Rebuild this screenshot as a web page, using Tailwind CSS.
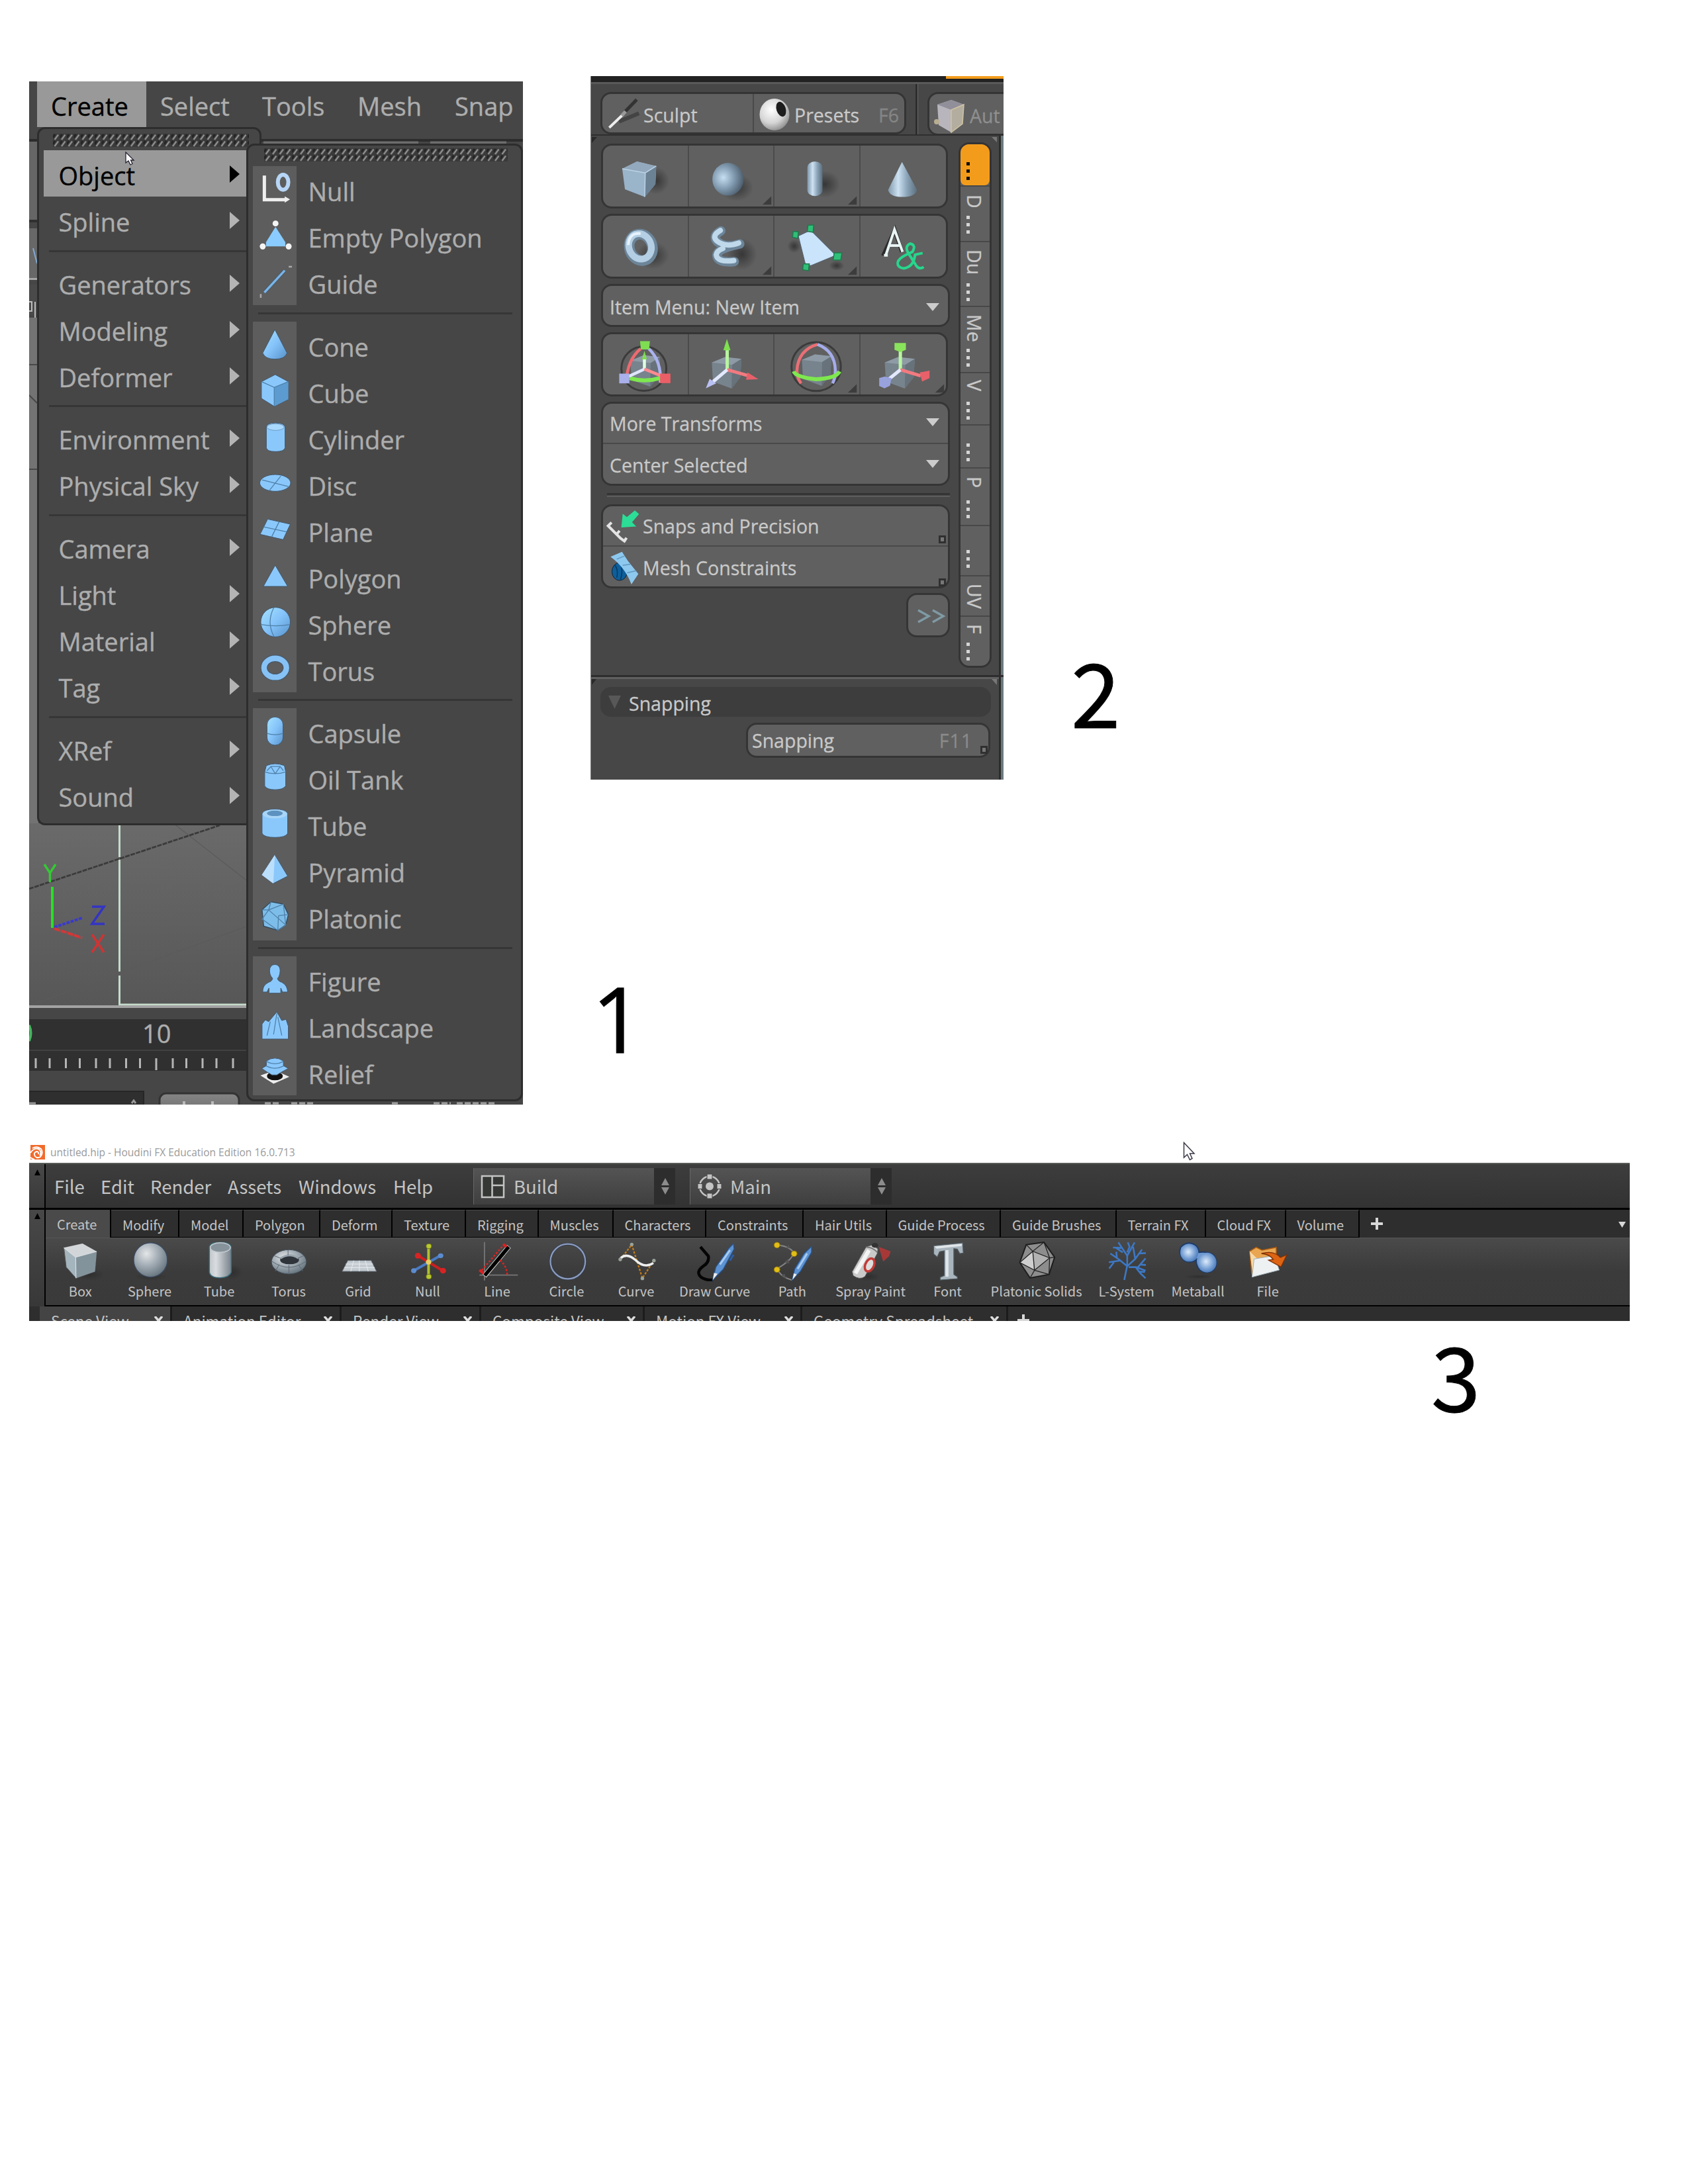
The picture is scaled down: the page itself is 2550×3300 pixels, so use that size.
<!DOCTYPE html>
<html lang="en">
<head>
<meta charset="utf-8">
<title>Primitive creation menus</title>
<script src="https://cdn.jsdelivr.net/npm/@tailwindcss/browser@4"></script>
</head>
<body class="bg-white">
<svg class="absolute w-0 h-0">
  <defs>
    <linearGradient id="bl" x1="0" x2="1" y1="0" y2="1"><stop offset="0" stop-color="#a6e4ff"/><stop offset=".5" stop-color="#84c2fa"/><stop offset="1" stop-color="#5793ca"/></linearGradient>
    <linearGradient id="met" x1="0" x2="1"><stop offset="0" stop-color="#8098ab"/><stop offset=".35" stop-color="#cde2f2"/><stop offset=".65" stop-color="#8ca5b9"/><stop offset="1" stop-color="#5b6e7e"/></linearGradient>
    <radialGradient id="ball" cx=".35" cy=".45" r=".65"><stop offset="0" stop-color="#c6dff2"/><stop offset=".5" stop-color="#869fb4"/><stop offset="1" stop-color="#4d5f6f"/></radialGradient>
    <radialGradient id="shade"><stop offset="0" stop-color="#2c2c2c" stop-opacity=".8"/><stop offset="1" stop-color="#2c2c2c" stop-opacity="0"/></radialGradient>
    <radialGradient id="gray" cx=".38" cy=".32" r=".7"><stop offset="0" stop-color="#e4e6e8"/><stop offset=".5" stop-color="#a3adb5"/><stop offset="1" stop-color="#687680"/></radialGradient>
    <radialGradient id="eye" cx=".4" cy=".35" r=".7"><stop offset="0" stop-color="#fff"/><stop offset=".6" stop-color="#d5d5d5"/><stop offset="1" stop-color="#8a8a8a"/></radialGradient>
    <radialGradient id="meta" cx=".45" cy=".45" r=".6"><stop offset="0" stop-color="#dcebfa"/><stop offset=".6" stop-color="#7ba3d6"/><stop offset="1" stop-color="#4576b6"/></radialGradient>
    <linearGradient id="tube" x1="0" x2="1"><stop offset="0" stop-color="#c0c6cb"/><stop offset=".3" stop-color="#d9dde0"/><stop offset="1" stop-color="#77818a"/></linearGradient>
    <linearGradient id="view" x1="0" x2="0" y1="0" y2="1"><stop offset="0" stop-color="#6a6a6a"/><stop offset="1" stop-color="#575757"/></linearGradient>
    <linearGradient id="btn" x1="0" x2="0" y1="0" y2="1"><stop offset="0" stop-color="#858585"/><stop offset="1" stop-color="#686868"/></linearGradient>
    <pattern id="grip" width="10.5" height="10" patternUnits="userSpaceOnUse"><rect width="10.5" height="10" fill="#3a3a3a"/><path d="M0 6 3 1" stroke="#242424" stroke-width="3"/><path d="M2.5 9 8 1.5" stroke="#929292" stroke-width="2.2"/></pattern>
  </defs>
</svg>
<main class="relative w-[2550px] h-[3300px] overflow-hidden bg-white">

  <!-- Menu bar with nested Create > Object menus -->
  <section class="absolute left-[44px] top-[123px] w-[746px] h-[1546px] overflow-hidden bg-[#464646] font-['Open_Sans',sans-serif] text-[38px] text-[#adadad] [-webkit-text-stroke:0.4px]">
    <svg class="absolute left-0 top-0" width="746" height="1546" viewBox="44 123 746 1546">
      <rect x="44" y="210" width="746" height="4" fill="#2c2c2c"/>
      <rect x="44" y="214" width="14" height="118" fill="#666"/><rect x="44" y="332" width="14" height="4" fill="#303030"/>
      <rect x="44" y="345" width="14" height="75" fill="#686868"/><path d="M50 375 56 398" stroke="#7fa9d4" stroke-width="2"/>
      <rect x="44" y="420" width="14" height="3" fill="#a5a5a5"/><rect x="44" y="430" width="14" height="46" fill="#4a4a4a"/>
      <path d="M53 456V480M44 456h4v14h-4" stroke="#bbb" stroke-width="2" fill="none"/>
      <rect x="44" y="480" width="14" height="768" fill="#737373"/><path d="M44 551h12M44 709h12M44 597l12 12" stroke="#484848" stroke-width="2"/>
      <path d="M398 215.500H632M650 215.500H765" stroke="#6c6c6c" stroke-width="4"/>
      <rect x="44" y="1244" width="330" height="276" fill="url(#view)"/>
      <path d="M262 1244 372 1330M44 1520 372 1400" stroke="#5b5b5b" stroke-width="1.200"/>
      <path d="M44 1343 332 1247" stroke="#3b3b3b" stroke-width="2.800" stroke-dasharray="7 1.500"/>
      <path d="M180.500 1244V1295M180.500 1299V1468M180.500 1474V1518H372" stroke="#c6dccc" stroke-width="3" fill="none"/>
      <rect x="44" y="1519" width="330" height="4" fill="#a3a3a3"/>
      <path d="M79 1340V1402" stroke="#28e028" stroke-width="4"/>
      <path d="M67 1306 75.500 1319 84 1306M75.500 1319V1333" stroke="#35c935" stroke-width="3.500" fill="none"/>
      <path d="M82 1401 124 1387" stroke="#3a3acb" stroke-width="4" stroke-dasharray="5 1.500"/>
      <path d="M82 1403 124 1417" stroke="#d23838" stroke-width="4" stroke-dasharray="9 1.500"/>
      <path d="M139 1370H157L139 1396H158" stroke="#3434c6" stroke-width="3.500" fill="none"/>
      <path d="M139 1412 157 1439M157 1412 139 1439" stroke="#cf3434" stroke-width="3.500"/>
      <rect x="44" y="1523" width="330" height="146" fill="#464646"/>
      <rect x="44" y="1540" width="330" height="78" fill="#303030"/><path d="M44 1587H374" stroke="#414141" stroke-width="2"/>
      <path d="M44 1549q5 12 0 24" stroke="#46b85f" stroke-width="4" fill="none"/>
      <path d="M54 1599v15M75 1599v15M99.500 1599v15M120.500 1599v15M145 1599v15M166 1599v15M190.500 1599v15M211.500 1599v15M236 1599v18M261 1599v15M281.500 1599v15M306 1599v15M327 1599v15M352 1599v15" stroke="#b5b5b5" stroke-width="3"/>
      <rect x="40" y="1649" width="177" height="30" fill="#2f2f2f" stroke="#262626" stroke-width="2"/><path d="M44 1667h10M199 1667l3-4 3 4" stroke="#999" stroke-width="3"/>
      <rect x="241" y="1652" width="120" height="40" rx="10" fill="url(#btn)" stroke="#333" stroke-width="3"/>
      <path d="M278 1669v-5M321 1669v-5" stroke="#bbb" stroke-width="4"/>
      <path d="M400 1667h24M440 1667h34M592 1667h12M655 1667h26M690 1667h60" stroke="#a3a3a3" stroke-width="3" stroke-dasharray="9 3"/>
    </svg>
    <div class="absolute left-[171px] top-[1412px] leading-[52px]">10</div>

    <nav class="relative flex h-[69px] leading-[75px] pl-3 whitespace-nowrap">
      <div class="w-[165px] pl-[21px] bg-[#999] text-black">Create</div>
      <div class="w-[153px] pl-[21px]">Select</div>
      <div class="w-[145px] pl-[22px]">Tools</div>
      <div class="w-[146px] pl-[21px]">Mesh</div>
      <div class="pl-[22px]">Snap</div>
    </nav>

    <div class="absolute left-[12px] top-[69px] w-[339px] h-[1055px] rounded-xl border-[3px] border-[#2d2d2d] bg-[#464646] pl-[7px]">
      <svg class="ml-[14px] mt-[7px] mb-[5px] block" width="296" height="20"><rect width="296" height="20" fill="url(#grip)"/></svg>
      <div id="menu" class="w-[320px]"></div>
    </div>

    <div class="absolute left-[328px] top-[94px] w-[418px] h-[1447px] rounded-xl border-[3px] border-[#2d2d2d] bg-[#464646] pl-[7px]">
      <svg class="ml-[17px] mt-1 mb-[7px] block" width="368" height="20"><rect width="368" height="20" fill="url(#grip)"/></svg>
      <div id="submenu"></div>
    </div>
    <svg class="absolute left-[145px] top-[106px]" width="15" height="22" viewBox="0 0 15 22"><path d="M1 1V17L5 14 8 20 11 18.500 8.500 13H13Z" fill="#fff" stroke="#223" stroke-width="1.300"/></svg>
  </section>

  <!-- Tool palette -->
  <section class="absolute left-[892px] top-[115px] w-[624px] h-[1063px] overflow-hidden bg-[#474747] font-['Open_Sans',sans-serif] text-[28.5px] leading-[40px] text-[#c9c9c9] [-webkit-text-stroke:0.3px] whitespace-nowrap border-l border-[#777]">
    <div class="h-[9px] bg-[#222] flex justify-end"><div class="w-[87px] h-[4px] bg-[#f39c1c]"></div></div>
    <div class="h-[79px] border-t-[3px] border-[#5a5a5a] flex pl-[14px]">
      <div class="mt-[12px] w-[462px] shrink-0 h-[64px] rounded-2xl border-[3px] border-[#343434] bg-[#606060] flex">
        <div class="w-[229px] shrink-0 border-r-2 border-[#4a4a4a] flex items-center pt-[5px]">
          <svg class="ml-[7px] shrink-0 [&_*]:[vector-effect:non-scaling-stroke]" width="52" height="56" viewBox="85 140 124 160" preserveAspectRatio="none"><path d="M128 248 200 212" stroke="#444" stroke-width="6"/><path d="M93 274 142 218" stroke="#eee" stroke-width="4"/><path d="M150 205 192 153" stroke="#333" stroke-width="5"/><path d="M138 222 152 204" stroke="#999" stroke-width="5"/></svg>
          <span class="pl-[3px]">Sculpt</span>
        </div>
        <div class="flex flex-1 items-center pt-[5px] pr-[8px]">
          <svg class="ml-[8px] shrink-0" width="46" height="50" viewBox="0 0 46 50"><ellipse cx="23" cy="24" rx="22.500" ry="24" fill="url(#eye)"/><ellipse cx="33" cy="16" rx="7" ry="11.500" fill="#1d1d1d" transform="rotate(-18 33 16)"/></svg>
          <span class="pl-[7px]">Presets</span><span class="ml-auto text-[#858585]">F6</span>
        </div>
      </div>
      <div class="ml-[14px] w-[4px] shrink-0 bg-[#2d2d2d] border-r border-[#6a6a6a]"></div>
      <div class="ml-[14px] mt-[12px] w-[200px] shrink-0 h-[66px] rounded-2xl border-[3px] border-[#343434] bg-[#606060] flex items-center pt-[5px]">
        <svg class="ml-[7px]" width="48" height="52" viewBox="0 0 48 52"><path d="M5 9 26 2 45 9 43 38 26 51 7 40Z" fill="#b9b5bc"/><path d="M5 9 26 2 45 9 26 17Z" fill="#918f99"/><path d="M26 17 45 9 43 38 26 51Z" fill="#b3ad9f" stroke="#cfc3a0" stroke-width="1.500"/><circle cx="4" cy="35" r="4" fill="#b9ad90"/></svg>
        <span class="pl-[6px] text-[#8f8f8f]">Aut</span>
      </div>
    </div>

    <div class="relative h-[817px] border-t-[2px] border-[#2f2f2f] flex bg-[#474747]">
      <div class="absolute right-0 top-0 w-[7px] h-full bg-[#6a7a7f] border-l-[3px] border-[#2c2c2c]"></div>
      <svg class="absolute left-0 top-0" width="620" height="12"><path d="M1 2H9L1 11Z" fill="#2a2a2a"/><path d="M605 2H613V10Z" fill="#777"/></svg>
      <div class="w-[527px] ml-[15px] pt-[12px]">
        <div id="prims" class="w-[524px] h-[98px] mb-[8px] grid grid-cols-4 grid-rows-1 rounded-2xl border-[3px] border-[#353535] bg-[#606060] divide-x-2 divide-[#4b4b4b] overflow-hidden"></div>
        <div id="prims2" class="w-[524px] h-[98px] mb-[8px] grid grid-cols-4 grid-rows-1 rounded-2xl border-[3px] border-[#353535] bg-[#606060] divide-x-2 divide-[#4b4b4b] overflow-hidden"></div>
        <div class="w-[527px] h-[65px] mb-[8px] pt-1 pl-[10px] pr-[13px] flex items-center justify-between rounded-2xl border-[3px] border-[#353535] bg-[#606060]">Item Menu: New Item<svg width="20" height="12"><path d="M0 0H20L10 12Z" fill="#ccc"/></svg></div>
        <div id="xforms" class="w-[524px] h-[97px] mb-[8px] grid grid-cols-4 grid-rows-1 rounded-2xl border-[3px] border-[#353535] bg-[#606060] divide-x-2 divide-[#4b4b4b] overflow-hidden"></div>
        <div class="w-[527px] h-[127px] mb-[11px] rounded-2xl border-[3px] border-[#353535] bg-[#606060] grid grid-rows-2 divide-y-2 divide-[#494949]">
          <div class="pl-[10px] pr-[13px] pt-[2px] flex items-center justify-between">More Transforms<svg class="-mt-1" width="20" height="12"><path d="M0 0H20L10 12Z" fill="#ccc"/></svg></div>
          <div class="pl-[10px] pr-[13px] pt-[4px] flex items-center justify-between">Center Selected<svg class="-mt-1" width="20" height="12"><path d="M0 0H20L10 12Z" fill="#ccc"/></svg></div>
        </div>
        <div class="ml-[9px] h-[6px] mb-[11px] border-t-[3px] border-b-[2px] border-t-[#353535] border-b-[#5d5d5d]"></div>
        <div class="w-[527px] h-[127px] mb-[7px] rounded-2xl border-[3px] border-[#353535] bg-[#606060] grid grid-rows-2 divide-y-2 divide-[#494949]">
          <div class="relative flex items-center pl-[5px] pt-[2px]">
            <svg class="[&_*]:[vector-effect:non-scaling-stroke]" width="52" height="56" viewBox="65 360 99 157" preserveAspectRatio="none"><path d="M80 423 70 437 106 490 117 502 123 488M96 470 103 458" fill="none" stroke="#e4e4e4" stroke-width="4"/><path d="M108 444 112 386 124 400 147 372 159 387 139 422 151 440Z" fill="#2bdd96"/></svg>
            <span class="pl-[3px]">Snaps and Precision</span>
            <div class="absolute right-[3px] bottom-[3px] w-[11px] h-[12px] border-[3px] border-[#303030] bg-[#777]"></div>
          </div>
          <div class="relative flex items-center pl-[5px] pt-[4px]">
            <svg class="[&_*]:[vector-effect:non-scaling-stroke]" width="52" height="56" viewBox="65 535 99 150" preserveAspectRatio="none"><ellipse cx="103" cy="625" rx="22" ry="36" fill="#0d5f9b" stroke="#123" stroke-width="1"/><path d="M90 600Q100 620 95 650M108 600Q112 630 106 656" stroke="#08375c" stroke-width="1.500" fill="none"/><path d="M77 565 110 545 127 582 157 635 137 677Q120 610 77 565Z" fill="#8dc8ef"/><path d="M95 575 117 562M112 600 134 595M125 630 150 622" stroke="#6297bd" stroke-width="1.500"/></svg>
            <span class="pl-[3px]">Mesh Constraints</span>
            <div class="absolute right-[3px] bottom-0 w-[11px] h-[12px] border-[3px] border-[#303030] bg-[#777]"></div>
          </div>
        </div>
        <div class="ml-auto w-[66px] h-[67px] rounded-2xl border-[3px] border-[#353535] bg-[#606060] flex items-center justify-end pr-[4px] pt-[2px]"><svg width="42" height="22" fill="none" stroke="#7f9aa4" stroke-width="3.500"><path d="M1 2 17 11 1 20M23 2 39 11 23 20"/></svg></div>
      </div>
      <div id="tabs" class="ml-[13px] mt-[10px] w-[50px] h-[794px] rounded-2xl border-[3px] border-[#343434] bg-[#606060] overflow-hidden"></div>
    </div>

    <div class="border-t-[3px] border-[#2d2d2d] h-[160px] pl-[14px] relative">
      <svg class="absolute left-0 top-0" width="620" height="13"><path d="M0 1.500H620" stroke="#606060" stroke-width="3"/><path d="M1 3H8L1 12Z" fill="#2a2a2a"/><path d="M605 3H613V12Z" fill="#777"/></svg>
      <div class="absolute right-0 top-0 w-[7px] h-full bg-[#6a7a7f] border-l-[3px] border-[#2c2c2c]"></div>
      <div class="mt-[15px] w-[590px] h-[45px] rounded-2xl bg-[#3d3d3d] flex items-center pt-[4px] pl-[12px]"><svg width="19" height="20" class="-mt-1"><path d="M0 0H19L9.500 20Z" fill="#585858"/></svg><span class="pl-[12px]">Snapping</span></div>
      <div class="relative ml-[220px] mt-[9px] w-[369px] h-[53px] rounded-2xl border-[3px] border-[#353535] bg-[#606060] flex items-center justify-between pl-[6px] pr-[24px] pt-[1px]">Snapping<span class="text-[#8a8a8a] tracking-[1px]">F11</span>
        <div class="absolute right-[1px] bottom-[3px] w-[11px] h-[12px] border-[3px] border-[#303030] bg-[#777]"></div>
      </div>
    </div>
  </section>

  <!-- Application window with tool shelf -->
  <section class="absolute left-[44px] top-[1727px] w-[2418px] h-[269px] overflow-hidden whitespace-nowrap font-['Noto_Sans_CJK_SC',sans-serif] text-[#c4c4c4]">
    <header class="h-[30px] flex items-center pl-[2px] font-['Open_Sans',sans-serif] text-[15.5px] text-[#9a9a9a]">
      <svg class="mt-[-2px]" width="22" height="22" viewBox="0 0 22 22"><rect width="22" height="22" fill="#f26b2c"/><path d="M3 5Q10 1 16 6 20 12 15 18 10 21 7 17 4 12 9 10 13 10 12 14M0 12Q5 4 12 6 18 10 14 16M0 19Q3 21 6 22" fill="none" stroke="#fff" stroke-width="1.900"/></svg>
      <span class="pl-[8px]">untitled.hip - Houdini FX Education Edition 16.0.713</span>
    </header>
    <div class="h-[71px] flex border-t-[2px] border-b-[3px] border-t-[#565b56] border-b-black bg-linear-to-b from-[#3d3d3d] to-[#323232]">
      <div class="w-[25px] shrink-0 border-r-2 border-black pl-[8px] pt-[8px] bg-linear-to-b from-[#484848] to-[#383838]"><svg width="9" height="9"><path d="M0 9H9L4.500 0Z" fill="#000"/></svg></div>
      <div class="flex text-[27.5px] leading-[66px] pl-[13px]">
        <span class="w-[70px]">File</span><span class="w-[75px]">Edit</span><span class="w-[117px]">Render</span><span class="w-[107px]">Assets</span><span class="w-[143px]">Windows</span><span class="w-[121px]">Help</span>
      </div>
      <div class="mt-[6px] w-[305px] h-[55px] flex text-[27.5px] leading-[54px] bg-[#2d2d2d]">
        <div class="w-[273px] flex bg-linear-to-b from-[#545454] to-[#3f3f3f] border-l border-[#666]"><svg class="ml-[10px] mt-[10px]" width="37" height="36" fill="#353835" stroke="#c4c4c4" stroke-width="2.500"><path d="M2 2H35V34H2ZM17.500 2V34M17.500 16H35"/></svg><span class="pl-[13px]">Build</span></div>
        <svg class="ml-[11px] mt-[15px]" width="12" height="25" fill="#8c8c8c"><path d="M0 11H12L6 0ZM0 14H12L6 25Z"/></svg>
      </div>
      <div class="mt-[6px] ml-[22px] w-[305px] h-[55px] flex text-[27.5px] leading-[54px] bg-[#2d2d2d]">
        <div class="w-[273px] flex bg-linear-to-b from-[#545454] to-[#3f3f3f] border-l border-[#666]"><svg class="ml-[10px] mt-[8px]" width="38" height="40"><circle cx="19" cy="19.500" r="15" fill="none" stroke="#c4c4c4" stroke-width="2.500"/><circle cx="19" cy="19.500" r="6" fill="#c4c4c4"/><path d="M15 1h8v8h-8zM15 30h8v8h-8zM1 15.500h7v8h-7zM30 15.500h7v8h-7z" fill="#c4c4c4" stroke="#444" stroke-width="1"/></svg><span class="pl-[12px]">Main</span></div>
        <svg class="ml-[11px] mt-[15px]" width="12" height="25" fill="#8c8c8c"><path d="M0 11H12L6 0ZM0 14H12L6 25Z"/></svg>
      </div>
    </div>
    <div class="h-[146px] flex">
      <div class="w-[25px] shrink-0 border-r-2 border-black pl-[8px] pt-[5px] bg-linear-to-b from-[#484848] to-[#383838]"><svg width="9" height="9"><path d="M0 9H9L4.500 0Z" fill="#000"/></svg></div>
      <div class="flex-1 flex flex-col">
        <div class="h-[42px] flex bg-[#2e2e2e] text-[20px] leading-[43px]">
          <div id="shelfTabs" class="flex"></div>
          <svg class="ml-[17px] mt-[12px]" width="18" height="18"><path d="M9 0V18M0 9H18" stroke="#d8d8d8" stroke-width="4"/></svg>
          <svg class="ml-auto mr-[6px] mt-[18px]" width="11" height="9"><path d="M0 0H11L5.500 9Z" fill="#d8d8d8"/></svg>
        </div>
        <div id="shelf" class="h-[104px] flex pl-0 pt-[3px] border-t border-[#555] border-b-[2px] border-b-black bg-linear-to-b from-[#4a4a4a] via-[#3b3b3b] to-[#3a3a3a] text-[20px]"></div>
      </div>
    </div>
    <div id="panes" class="h-[22px] overflow-hidden flex bg-[#2e2e2e] pl-[16px] text-[22.5px] leading-[42px]"></div>
  </section>
  <svg class="absolute left-[1787px] top-[1725px]" width="20" height="29" viewBox="0 0 20 29"><path d="M1.500 1.500V24L6.500 19.500 10.500 27.500 14 25.500 10.500 18H17Z" fill="#fff" stroke="#3a3a48" stroke-width="1.500"/></svg>

  <div class="absolute left-[894px] top-[1470px] text-[137px] leading-none font-['Open_Sans',sans-serif] text-black [-webkit-text-stroke:1px]">1</div>
  <div class="absolute left-[1618px] top-[975px] text-[134px] leading-none font-['Noto_Sans_CJK_SC',sans-serif] text-black [-webkit-text-stroke:1px]">2</div>
  <div class="absolute left-[2162px] top-[2008px] text-[134px] leading-none font-['Noto_Sans_CJK_SC',sans-serif] text-black [-webkit-text-stroke:1px]">3</div>
</main>

<script>
const el = id => document.getElementById(id);

// First-level menu; null marks a separator
el('menu').innerHTML = ['Object','Spline',null,'Generators','Modeling','Deformer',null,'Environment','Physical Sky',null,'Camera','Light','Material','Tag',null,'XRef','Sound'].map((t, i) => t === null
  ? '<div class="h-[24.4px] pt-[10.500px] pl-[8px]"><div class="h-[3px] bg-[#363636]"></div></div>'
  : `<div class="h-[70.1px] leading-[77.5px] pl-[22.5px] flex ${i ? '' : 'bg-[#999] text-black'}">${t}<svg class="ml-auto mr-[24px] mt-[23px]" width="15" height="26"><path d="M0 0 15 13 0 26Z" fill="${i ? '#b4b4b4' : '#000'}"/></svg></div>`).join('');

// Second-level menu: [label, viewBox top, viewBox height, drawing]
const B = 'fill="url(#bl)" stroke="#42566a" stroke-width="1"';
const F = 'fill="#8ac8fc" stroke="#42566a" stroke-width="1"';
const L = 'fill="none" stroke="#4f80a8" stroke-width="1.3"';
const groups = [
 [['Null',425,210,'<path d="M742 468V577H806" fill="none" stroke="#eee" stroke-width="5"/><path d="M804 562 820 576 804 591Z" fill="#eee"/><ellipse cx="799" cy="498" rx="16" ry="34" fill="none" stroke="#b7d6f7" stroke-width="6"/>'],
  ['Empty Polygon',635,210,'<path d="M776 700 806 770V789H747V770Z" fill="#8accff"/><g fill="#f4f4f4"><ellipse cx="776" cy="685" rx="9" ry="13"/><ellipse cx="737" cy="789" rx="9" ry="14"/><ellipse cx="816" cy="789" rx="9" ry="14"/></g>'],
  ['Guide',845,210,'<path d="M742 998 804 898" stroke="#3f5468" stroke-width="5"/><path d="M742 998 804 898" stroke="#7ab4e6" stroke-width="3.500"/><path d="M731 1005V1022M816 881H826" stroke="#aaa" stroke-width="2.500"/>']],
 [['Cone',1128,210,`<path d="M774 1164 811 1270Q805 1298 774 1298 744 1298 737 1270Z" ${B}/>`],
  ['Cube',1338,210,`<path d="M775 1368 815 1400V1480L772 1512 733 1476V1400Z" ${F}/><path d="M772 1426 815 1400V1480L772 1512Z" fill="#5c9bd0"/><path d="M733 1400 772 1426 815 1400M772 1426V1512" ${L}/>`],
  ['Cylinder',18,210,`<path d="M748 75Q750 57 776 57 802 57 805 75V170Q802 187 776 187 750 187 748 170Z" ${F}/><ellipse cx="776" cy="76" rx="26" ry="15" fill="#a9d8fd" stroke="#6d9cc4" stroke-width="1"/>`],
  ['Disc',228,210,`<ellipse cx="775" cy="329" rx="47" ry="38" ${F}/><path d="M735 315 815 345M758 362 792 298" ${L}/>`],
  ['Plane',438,210,`<path d="M752 493 821 516 799 586 729 562Z" ${F}/><path d="M740 528 810 551M787 505 764 574" ${L}/>`],
  ['Polygon',649,210,`<path d="M775 703 813 799H739Z" ${F}/>`],
  ['Sphere',859,210,`<ellipse cx="776" cy="961" rx="45" ry="67" ${B}/><path d="M771 895Q748 960 771 1026M732 972Q776 984 820 972" ${L}/>`],
  ['Torus',1069,210,'<ellipse cx="775" cy="1168" rx="34" ry="43" fill="none" stroke="#42566a" stroke-width="10.500"/><ellipse cx="775" cy="1168" rx="34" ry="43" fill="none" stroke="#86c2f5" stroke-width="8.500"/>']],
 [['Capsule',1351,210,`<rect x="750" y="1391" width="49" height="128" rx="24" ry="36" ${B}/><path d="M750 1465Q775 1477 799 1465" ${L}/>`],
  ['Oil Tank',30,200,`<path d="M748 78Q775 62 803 78L807 105V165Q800 182 775 182 748 182 743 165V105Z" ${F}/><path d="M743 105Q775 120 807 105M750 100 762 82H790L800 100M762 82 775 113 790 82" ${L}/>`],
  ['Tube',230,200,`<path d="M735 285Q740 266 774 266 808 266 813 285V370Q808 388 774 388 740 388 735 370Z" ${F}/><ellipse cx="774" cy="287" rx="37" ry="19" fill="#a9d5f7"/><ellipse cx="774" cy="284" rx="24" ry="12" fill="#5d92c0"/>`],
  ['Pyramid',430,200,`<path d="M774 463 813 555 769 587 734 550Z" ${F}/><path d="M774 463 769 587 734 550Z" fill="#bcdffc"/>`],
  ['Platonic',629,200,`<path d="M762 665 800 675 815 720 807 765 783 788 740 770 735 700Z" fill="#7dbdea" stroke="#31475a" stroke-width="1.300"/><path d="M762 665 755 700 800 675 807 765 M755 700 735 740 783 788 807 765 755 700M735 700 755 700M785 725 815 720M783 788 785 725" ${L}/>`]],
 [['Figure',898,200,`<path d="M774 933Q790 935 790 960 789 985 782 993 783 1005 795 1010 812 1022 813 1052H797L792 1035V1057H756V1035L750 1052H737Q736 1022 755 1010 766 1005 767 993 758 980 758 960 758 935 774 933Z" ${F}/>`],
  ['Landscape',1098,200,`<path d="M735 1255V1190L745 1172 755 1180 780 1138 795 1175 808 1170 815 1200V1255Z" ${F}/><path d="M760 1180 750 1240M780 1145 770 1235M783 1160 795 1240" ${L}/>`],
  ['Relief',1298,200,`<path d="M730 1412 774 1390 818 1418 770 1448Z" fill="#eee"/><ellipse cx="774" cy="1415" rx="24" ry="18" fill="#111"/><path d="M748 1350Q774 1325 800 1350V1370L815 1382 795 1397 780 1410H765L750 1397 734 1382 748 1370Z" ${F}/><path d="M748 1352Q774 1372 800 1352M748 1372Q774 1390 800 1372" ${L}/>`]]
];
el('submenu').innerHTML = groups.map(g => '<div>' + g.map(([t, y, h, d]) =>
  `<div class="h-[70.05px] leading-[77.5px] flex"><div class="w-[66px] h-full bg-[#5d5d5d]"><svg class="w-full h-full [&_*]:[vector-effect:non-scaling-stroke]" viewBox="707 ${y} 133 ${h}" preserveAspectRatio="none">${d}</svg></div><span class="pl-[17.5px]">${t}</span></div>`).join('') + '</div>')
  .join('<div class="h-[24.4px] pt-[10.500px] pl-[8px]"><div class="w-[384px] h-[3px] bg-[#363636]"></div></div>');

// Palette icon grids: [viewBox x, has corner flyout, drawing]
const cell = (y, h) => ([x, fly, d]) => `<div class="relative min-h-0"><svg class="absolute inset-0 w-full h-full [&_*]:[vector-effect:non-scaling-stroke]" viewBox="${x} ${y} 308 ${h}" preserveAspectRatio="none">${d}${fly ? `<path d="M${x + 300} ${y + h - 45}V${y + h - 8}H${x + 268}Z" fill="#3c3c3c"/>` : ''}</svg></div>`;
const sh = (x, y, rx, ry) => `<ellipse cx="${x}" cy="${y}" rx="${rx}" ry="${ry}" fill="url(#shade)"/>`;
el('prims').innerHTML = [
 [68,0, sh(262,495,48,60)+'<path d="M138 442 192 410 262 430 259 510 220 566 148 532Z" fill="#9ab4ca"/><path d="M138 442 192 410 262 430 222 460Z" fill="#93a9bd"/><path d="M222 460 262 430 259 510 220 566Z" fill="#6b8194"/><path d="M138 442 222 460 262 430M222 460 220 566" fill="none" stroke="#bcd4e6" stroke-width="1.500"/>'],
 [377,1, sh(550,525,62,60)+'<ellipse cx="519" cy="488" rx="57" ry="72" fill="url(#ball)"/>'],
 [688,1, sh(872,510,55,60)+'<rect x="808" y="410" width="55" height="152" rx="27" ry="26" fill="url(#met)"/>'],
 [999,0, '<path d="M1148 412 1202 535Q1195 566 1150 566 1104 566 1098 535Z" fill="url(#met)"/>']
].map(cell(340, 268)).join('');
el('prims2').innerHTML = [
 [68,0, sh(250,815,60,60)+'<ellipse cx="206" cy="780" rx="42" ry="58" fill="none" stroke="#6d8599" stroke-width="16" transform="rotate(-10 206 780)"/><ellipse cx="203" cy="776" rx="41" ry="56" fill="none" stroke="#b4cfe4" stroke-width="10" transform="rotate(-10 203 776)"/><path d="M160 770Q162 715 205 720" fill="none" stroke="#e6f3fd" stroke-width="4"/>'],
 [377,1, sh(570,810,55,70)+'<g fill="none" stroke-linecap="round"><path d="M493 708Q460 730 480 755 510 785 562 765M562 765Q480 785 478 815 480 850 542 842" stroke="#6d8599" stroke-width="14"/><path d="M491 706Q458 728 478 752 508 782 558 761M500 785Q478 795 476 812 478 846 540 838" stroke="#bfd8ea" stroke-width="8"/></g>'],
 [688,1, sh(760,775,25,30)+sh(915,860,28,22)+'<path d="M775 730 820 705 912 815 820 860 800 850Z" fill="#c9e4fb" stroke="#54606e" stroke-width="1"/><g fill="#2fbf78" stroke="#1c7a4b" stroke-width="1.500"><path d="M810 684 831 682 829 714 808 710ZM756 710 775 712 773 741 754 736ZM906 804 934 804 930 836 902 836ZM793 852 815 852 812 882 791 878Z"/></g>'],
 [999,0, '<g fill="none" stroke="#2b2b2b" stroke-width="6"><path d="M1080 817 1122 705 1148 800"/></g><path d="M1083 815H1097M1090 813 1121 702 1150 800M1103 772H1142" fill="none" stroke="#e8f4f4" stroke-width="4"/><path d="M1222 805 1195 812Q1190 865 1155 872 1125 866 1135 838 1145 820 1185 800 1200 770 1178 764 1155 775 1172 808L1200 862Q1212 878 1226 866" fill="none" stroke="#26d68c" stroke-width="4"/>']
].map(cell(642, 266)).join('');
const cube = (x, y) => `<path d="M${x} ${y} ${x+48} ${y-24} ${x+108} ${y-16} ${x+104} ${y+65} ${x+72} ${y+115} ${x+4} ${y+85}Z" fill="#77838d"/><path d="M${x} ${y} ${x+48} ${y-24} ${x+108} ${y-16} ${x+74} ${y+10}Z" fill="#8e9ba6"/><path d="M${x+74} ${y+10} ${x+108} ${y-16} ${x+104} ${y+65} ${x+72} ${y+115}Z" fill="#67727b"/>`;
el('xforms').innerHTML = [
 [68,0, '<ellipse cx="217" cy="1303" rx="82" ry="98" fill="none" stroke="#3b3b3b" stroke-width="3"/>'+cube(168,1268)+'<g fill="none" stroke-width="4.500"><path d="M205 1215Q155 1265 153 1365" stroke="#ee6a70"/><path d="M235 1215Q282 1270 277 1365" stroke="#aab2ee"/><path d="M165 1345Q220 1365 275 1345" stroke="#7ee84f" stroke-width="6"/><path d="M219 1305V1245" stroke="#e0ffe0"/><path d="M219 1305 160 1338" stroke="#dfe6ff"/><path d="M219 1305 280 1335" stroke="#ff8a90"/></g><path d="M203 1182 239 1182 236 1218H206ZM210 1262 219 1225 228 1262Z" fill="#7fdd52"/><rect x="127" y="1325" width="37" height="43" fill="#a9b0ea"/><rect x="276" y="1325" width="38" height="42" fill="#ea5f66"/>'],
 [377,0, cube(460,1276)+'<path d="M516 1308V1210" stroke="#b8f5a0" stroke-width="5"/><path d="M502 1222 515 1172 528 1222Z" fill="#7fe050"/><path d="M516 1308 595 1335" stroke="#f27a80" stroke-width="5"/><path d="M590 1320 630 1350 585 1352Z" fill="#e8606a"/><path d="M516 1308 465 1360" stroke="#e3e9ff" stroke-width="5"/><path d="M452 1348 438 1390 476 1368Z" fill="#b9c0f2"/>'],
 [688,1, '<ellipse cx="840" cy="1294" rx="90" ry="108" fill="none" stroke="#3b3b3b" stroke-width="3"/>'+cube(788,1264)+'<g fill="none" stroke-width="4.500"><path d="M845 1196Q775 1220 770 1310 770 1345 785 1368" stroke="#ea6f75"/><path d="M845 1196Q908 1225 910 1310 910 1345 900 1368" stroke="#a5acea"/><path d="M758 1315Q765 1340 840 1350 915 1345 925 1315" stroke="#7ee84f" stroke-width="6"/></g>'],
 [999,1, cube(1086,1276)+'<path d="M1142 1308V1225" stroke="#b8f5a0" stroke-width="5"/><path d="M1121 1190H1162V1220L1142 1230 1121 1220Z" fill="#8ae35c"/><path d="M1142 1308 1215 1335" stroke="#f27a80" stroke-width="5"/><path d="M1212 1320 1247 1312V1345L1220 1360Z" fill="#e8606a"/><path d="M1142 1308 1095 1355" stroke="#e3e9ff" stroke-width="5"/><path d="M1066 1345 1085 1338 1110 1345 1105 1378 1085 1390 1066 1380Z" fill="#98a2dd"/>']
].map(cell(1151, 266)).join('');

// Vertical tab strip: [label, height, letters offset, dots offset]
el('tabs').innerHTML = [['',62,0,25,1],['D',84,12,42],['Du',98,11,60],['Me',100,11,61],['V',79,10,41],['',65,0,25],['P',87,12,46],['',76,0,34],['UV',61,11,null],['F',80,11,37]].map(([t, h, a, b, on]) =>
  `<div class="relative ${on ? 'bg-[#f39c1c] rounded-lg' : 'border-t-2 border-[#484848]'} w-full" style="height:${h}px"><div class="absolute left-px w-[40px] leading-[40px] [writing-mode:vertical-rl]" style="top:${a}px">${t}</div>${b === null ? '' : `<svg class="absolute left-[9px] w-[6px] h-[30px]" style="top:${b}px"><path d="M0 2h5v5H0zM0 13h5v5H0zM0 24h5v5H0z" fill="${on ? '#111' : '#d5d5d5'}"/></svg>`}</div>`).join('');

// Shelf tabs
el('shelfTabs').innerHTML = [['Create',99],['Modify',103],['Model',97],['Polygon',116],['Deform',109],['Texture',111],['Rigging',109.5],['Muscles',113],['Characters',140.5],['Constraints',147],['Hair Utils',125.5],['Guide Process',172.5],['Guide Brushes',174.5],['Terrain FX',135],['Cloud FX',121],['Volume',111]].map(([t, w], i) =>
  `<div class="h-full pl-[17px] border-r-2 border-black ${i ? 'border-t border-t-[#4a4a4a] border-b border-b-black' : 'bg-[#4a4a4a]'}" style="width:${w}px">${t}</div>`).join('');

// Shelf tools: [label, cell width, icon centre, drawing]
const pen = (x, y) => `<path d="M${x} ${y} ${x+10} ${y-58} ${x+55} ${y-145} ${x+70} ${y-165} ${x+72} ${y-140} ${x+35} ${y-48}Z" fill="#5d93d3" stroke="#27538c" stroke-width="1.300"/><path d="M${x+24} ${y-70} ${x+58} ${y-135}" stroke="#a9cbef" stroke-width="3"/><path d="M${x} ${y} ${x+4} ${y-32} ${x+16} ${y-28}Z" fill="#eee"/><path d="M${x+70} ${y-115} ${x+58} ${y-88}" stroke="#2c5fa5" stroke-width="3"/>`;
const tools = [
 ['Box',104.5,203, sh(235,645,50,28)+'<path d="M147 524 210 505 258 541 252 632 188 662 155 612Z" fill="#a5b5bd" stroke="#555" stroke-width="1"/><path d="M147 524 210 505 258 541 187 567Z" fill="#d3d6d9"/><path d="M187 567 258 541 252 632 188 662Z" fill="#83939c"/><path d="M147 524 187 567 258 541M187 567 188 662" fill="none" stroke="#d8dde0" stroke-width="1.200"/>'],
 ['Sphere',105,437, sh(440,655,55,18)+'<ellipse cx="439" cy="579" rx="57" ry="78" fill="url(#gray)" stroke="#3c4a5e" stroke-width="1.500"/>'],
 ['Tube',105,672, sh(715,635,35,35)+'<path d="M638 522Q640 500 674 500 708 500 712 522V635Q705 660 674 660 642 660 638 635Z" fill="url(#tube)" stroke="#3d6e7c" stroke-width="1.500"/><ellipse cx="675" cy="523" rx="34" ry="22" fill="#87939b" stroke="#c5ccd1" stroke-width="1.500"/>'],
 ['Torus',105,908, '<ellipse cx="908" cy="588" rx="59" ry="55" fill="url(#gray)" stroke="#444f5a" stroke-width="1"/><ellipse cx="910" cy="579" rx="32" ry="20" fill="#2f343a"/><path d="M880 572Q910 545 940 572" fill="none" stroke="#9aa4ad" stroke-width="3"/><path d="M850 585Q908 640 966 585M875 600 862 630M908 602V642M940 600 955 630M858 560 880 572M905 535V558M958 560 938 572" fill="none" stroke="#5e6872" stroke-width="1"/>'],
 ['Grid',105,1142, '<path d="M1106 582H1185L1203 631H1087Z" fill="#c3cad0" stroke="#687078" stroke-width="1"/><path d="M1099 598H1191M1094 614H1197M1126 582 1116 631M1145 582V631M1165 582 1175 631" stroke="#e8ecef" stroke-width="1"/>'],
 ['Null',105,1378, '<g stroke-width="4"><path d="M1380 515V655" stroke="#b0bf2c"/><path d="M1330 628 1420 560" stroke="#4a7cc4"/><path d="M1344 560 1428 628" stroke="#cc2020"/></g><g fill="#b9c830" stroke="#6c7510" stroke-width="1"><ellipse cx="1381" cy="517" rx="9" ry="11"/><ellipse cx="1381" cy="655" rx="9" ry="11"/></g><g fill="#5b8cd0"><ellipse cx="1330" cy="628" rx="9" ry="11"/><ellipse cx="1421" cy="560" rx="9" ry="11"/></g><g fill="#d92323"><ellipse cx="1344" cy="560" rx="10" ry="13"/><ellipse cx="1429" cy="628" rx="10" ry="13"/></g><ellipse cx="1380" cy="589" rx="9" ry="11" fill="#e8d060"/>'],
 ['Line',105,111, '<path d="M67 498V672M50 648H180" stroke="#777" stroke-width="1.800"/><path d="M67 652 150 518" stroke="#ccc" stroke-width="7.500"/><path d="M68 650 149 520" stroke="#000" stroke-width="5.500"/><path d="M58 626 130 514M120 580Q144 610 144 650" fill="none" stroke="#d22" stroke-width="2.500" stroke-dasharray="3 2.500"/><path d="M50 625 64 640M130 508 142 520" stroke="#d22" stroke-width="4"/>'],
 ['Circle',105,347, '<ellipse cx="350" cy="586" rx="59" ry="79" fill="none" stroke="#333d50" stroke-width="4"/><ellipse cx="350" cy="586" rx="59" ry="79" fill="none" stroke="#8c9cbe" stroke-width="2.200"/>'],
 ['Curve',105,583, '<path d="M529 576 567 510 603 662 641 583" fill="none" stroke="#c47a18" stroke-width="2.300" stroke-dasharray="3.500 2"/><path d="M529 572Q550 545 580 580 610 620 640 593" fill="none" stroke="#eee" stroke-width="3.500"/><g fill="#9aa39a"><ellipse cx="528" cy="577" rx="6" ry="8"/><ellipse cx="567" cy="509" rx="6" ry="8"/><ellipse cx="603" cy="663" rx="6" ry="8"/><ellipse cx="642" cy="582" rx="6" ry="8"/></g>'],
 ['Draw Curve',132,848, '<path d="M800 520 827 562Q830 590 812 605 780 635 805 660 820 672 842 670" fill="none" stroke="#050505" stroke-width="4.500"/>'+pen(842,670)],
 ['Path',102.6,1111, '<path d="M1062 512Q1105 518 1117 548 1110 580 1062 618 1070 655 1110 670" fill="none" stroke="#858585" stroke-width="2"/><path d="M1092 522 1105 528 1100 510ZM1085 590 1102 596 1098 575ZM1075 650 1092 665 1086 642Z" fill="#555"/><g fill="#e0bd18" stroke="#8d7300" stroke-width="1"><ellipse cx="1060" cy="512" rx="10" ry="13"/><ellipse cx="1118" cy="551" rx="10" ry="13"/><ellipse cx="1060" cy="623" rx="10" ry="13"/></g><path d="M1112 670 1120 620 1152 550 1177 518 1177 545 1140 630Z" fill="#5d93d3" stroke="#27538c" stroke-width="1.300"/><path d="M1130 620 1162 550" stroke="#a9cbef" stroke-width="3"/><path d="M1112 670 1117 640 1127 645Z" fill="#eee"/>'],
 ['Spray Paint',134,1378, sh(1370,655,40,20)+'<path d="M1405 520 1445 540 1440 562 1420 587Z" fill="#d33" opacity=".65"/><path d="M1315 632 1362 520 1385 510 1402 530 1400 550 1358 655Q1340 672 1318 650Z" fill="#c9c9c9" stroke="#555" stroke-width="1"/><path d="M1326 640 1372 535" stroke="#f4f4f4" stroke-width="6"/><path d="M1362 522Q1382 520 1400 545" fill="none" stroke="#777" stroke-width="2"/><ellipse cx="1374" cy="602" rx="15" ry="30" fill="#ddd" stroke="#c23a36" stroke-width="3.500" transform="rotate(15 1374 602)"/><ellipse cx="1392" cy="513" rx="11" ry="11" fill="#333"/>'],
 ['Font',99,117, '<path d="M70 515 168 502 170 548 158 550 150 530 138 528V645L150 656V664L92 670V658L106 650V538L90 542 82 566 70 552Z" fill="#a9b5bd" stroke="#535c63" stroke-width="1.200"/><path d="M72 518 166 506 164 516 80 528ZM110 535H120V655H110Z" fill="#dfe5e9"/>'],
 ['Platonic Solids',169,417, '<path d="M383 510 443 499 479 567 460 645 396 661 361 591Z" fill="#8d8d8d" stroke="#1d1d1d" stroke-width="2"/><path d="M405 540 462 570 410 626 361 591Z" fill="#cfcfcf"/><path d="M405 540 408 626 462 570Z" fill="#b2b2b2"/><path d="M383 510 405 540 443 499 462 570 479 567M361 591 405 540 462 570 411 626 361 591M405 540 411 626 396 661M411 626 460 645 462 570" fill="none" stroke="#222" stroke-width="1.300"/>'],
 ['L-System',103,722, '<path d="M715 670 725 605V560L695 500M725 560 750 500M725 545 733 520 727 500M705 525 677 523M710 545 685 523M725 608 700 580 668 550M690 570 688 542M700 582 663 590M680 590 664 618M725 608 752 575 745 520M752 575 775 532M765 550 788 548M730 612H755L787 628M760 614 787 572M768 600 788 602M755 615 770 640 787 662M765 632 785 634" fill="none" stroke="#3d78c4" stroke-width="2.600"/>'],
 ['Metaball',113,963, sh(965,655,50,10)+'<path d="M934 503Q965 508 967 545 990 538 1015 555 1035 590 1018 622 995 648 970 625 955 600 958 578 945 595 920 585 895 560 905 522 918 503 934 503Z" fill="#6f9bd2" stroke="#1d3c6a" stroke-width="2"/><ellipse cx="934" cy="547" rx="30" ry="40" fill="url(#meta)"/><ellipse cx="994" cy="591" rx="32" ry="45" fill="url(#meta)"/>'],
 ['File',98,1200, '<path d="M1138 540 1160 522 1180 535 1228 522V600L1150 655 1145 640Z" fill="#e9a550" stroke="#a85a10" stroke-width="1.500"/><path d="M1138 540 1150 655 1165 575Z" fill="#f6d9a8"/><path d="M1153 575 1222 560 1238 625 1146 657Z" fill="#eef1f2" stroke="#9fb0b8" stroke-width="1"/><path d="M1178 550Q1220 535 1242 568L1264 556 1244 611 1202 580 1218 577Q1205 553 1178 550Z" fill="#dc6413" stroke="#7d2f05" stroke-width="1.300"/>']
];
el('shelf').innerHTML = tools.map(([t, w, c, d]) =>
  `<div class="shrink-0 flex flex-col items-center" style="width:${w}px"><svg class="h-[62px] w-[67px] [&_*]:[vector-effect:non-scaling-stroke]" viewBox="${c - 75} 490 150 186" preserveAspectRatio="none">${d}</svg><span class="leading-[30px]">${t}</span></div>`).join('');

// Pane tabs, cut by the lower edge of the window
el('panes').innerHTML = [['Scene View',200],['Animation Editor',256],['Render View',211],['Composite View',247],['Motion FX View',238],['Geometry Spreadsheet',311]].map(([t, w], i) =>
  `<div class="shrink-0 h-full pl-[17px] pr-[11px] flex justify-between border-r-[3px] border-[#1c1c1c] ${i ? '' : 'bg-[#444]'}" style="width:${w}px"><span>${t}</span><svg class="mt-[15px]" width="13" height="13"><path d="M1 0 12 13M12 0 1 13" stroke="#ddd" stroke-width="3.500"/></svg></div>`).join('') + '<svg class="ml-[14px] mt-[12px]" width="18" height="18"><path d="M9 0V18M0 9H18" stroke="#d8d8d8" stroke-width="4"/></svg>';
</script>
</body>
</html>
